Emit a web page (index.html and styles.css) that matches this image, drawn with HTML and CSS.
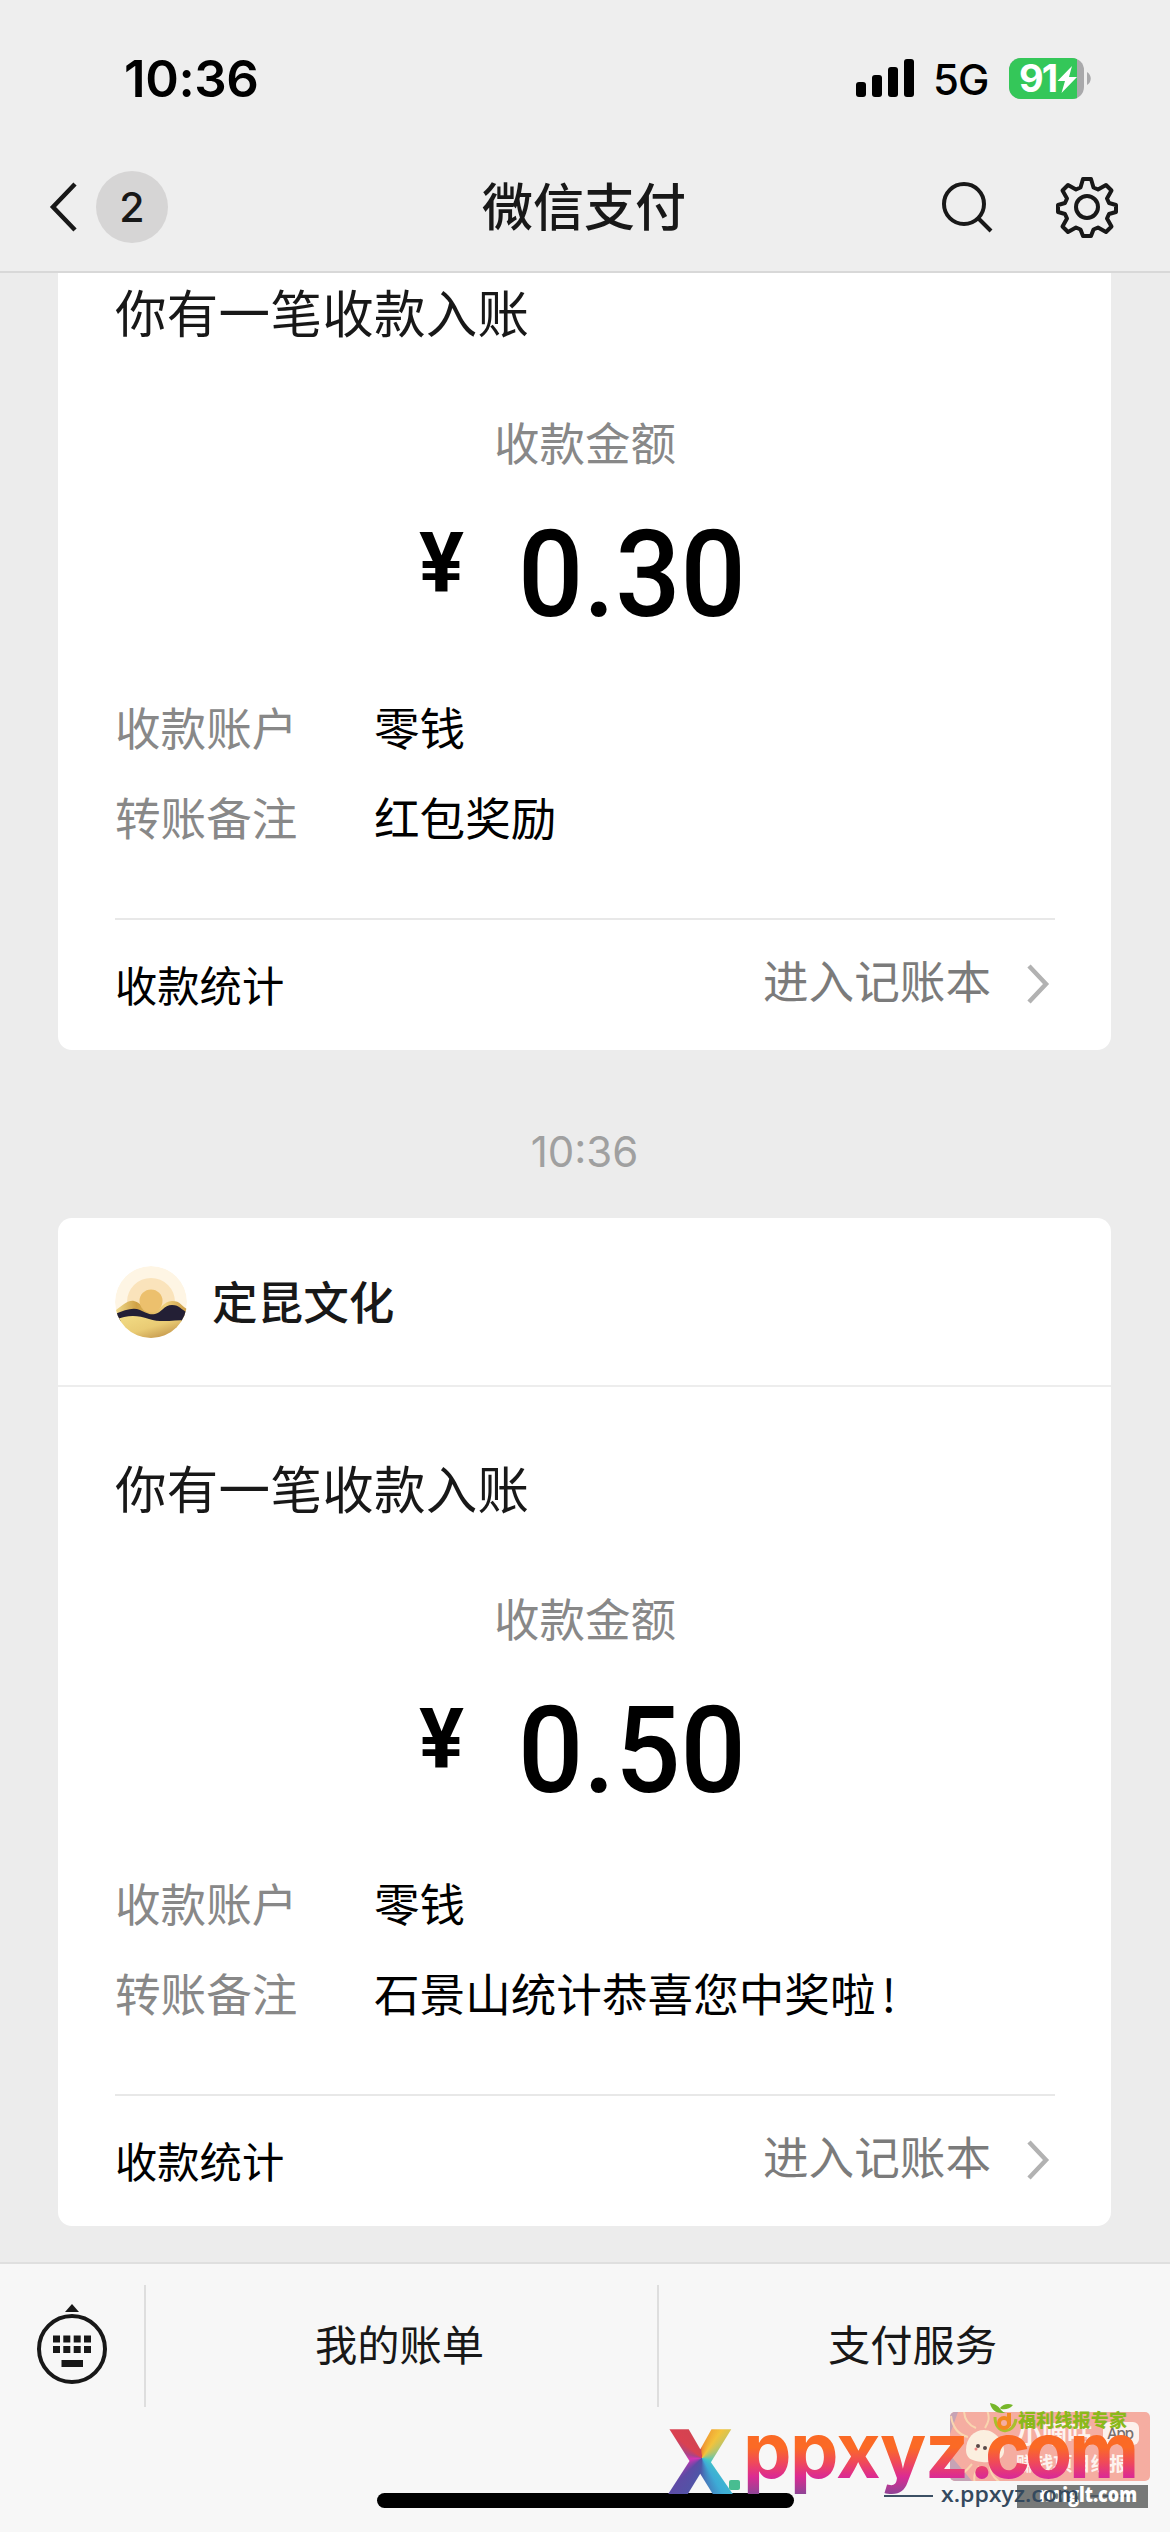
FILE: index.html
```html
<!DOCTYPE html>
<html lang="zh-CN">
<head>
<meta charset="utf-8">
<title>微信支付</title>
<link rel="stylesheet" href="styles.css">
</head>
<body>
<div class="screen">
  <header class="top">
    <div class="status">
      <span class="clock">10:36</span>
      <div class="status-right">
        <svg class="signal" viewBox="0 0 59 38"><rect y="23" width="10" height="15" rx="3"/><rect x="16" y="16" width="10" height="22" rx="3"/><rect x="32" y="8" width="10" height="30" rx="3"/><rect x="48" width="10" height="38" rx="3"/></svg>
        <span class="network">5G</span>
        <svg class="battery" viewBox="0 0 83 41">
          <clipPath id="cell"><rect width="75" height="41" rx="12"/></clipPath>
          <g clip-path="url(#cell)"><rect width="75" height="41" fill="#a9a9ab"/><rect width="68" height="41" fill="#34c759"/></g>
          <path d="M78 14c5 3 5 10 0 13z" fill="#a9a9ab"/>
          <text x="10" y="34" class="level">91</text>
          <path d="M63 8 48.500 23h7.500l-3.500 12L68 19h-8z" fill="#fff"/>
        </svg>
      </div>
    </div>
    <nav class="nav">
      <div class="nav-side">
        <svg class="back" viewBox="0 0 30 52"><path d="M26 3 4 26l22 23"/></svg>
        <span class="badge">2</span>
      </div>
      <h1 class="nav-title">微信支付</h1>
      <div class="nav-side nav-actions">
        <svg class="search" viewBox="0 0 54 54"><circle cx="23" cy="24" r="20"/><path d="M37.500 38.500 50 51"/></svg>
        <svg class="gear" viewBox="-32 -32 64 64"><circle r="11"/><path d="M-4-28h8l2.500 8.500 4.500 2 8-4.500 5.500 5.500-4.500 8 2 4.500 7 2v7l-7 2-2 4.500 4.500 8-5.500 5.500-8-4.500-4.500 2-2.500 6.500h-8l-2.500-6.500-4.500-2-8 4.500-5.500-5.500 4.500-8-2-4.500-7-2v-7l7-2 2-4.500-4.500-8 5.500-5.500 8 4.500 4.500-2z"/></svg>
      </div>
    </nav>
  </header>

  <main class="chat">
    <article class="card card-cut">
      <div class="card-body">
        <h2 class="card-title">你有一笔收款入账</h2>
        <p class="caption">收款金额</p>
        <p class="amount"><span class="yen">¥</span><span class="sum">0.30</span></p>
        <dl class="details">
          <dt>收款账户</dt><dd>零钱</dd>
          <dt>转账备注</dt><dd>红包奖励</dd>
        </dl>
        <div class="card-foot">
          <span>收款统计</span>
          <span class="ledger">进入记账本<svg class="chevron" viewBox="0 0 24 42"><path d="m3 3 17 18L3 39"/></svg></span>
        </div>
      </div>
    </article>

    <time class="stamp">10:36</time>

    <article class="card">
      <div class="merchant">
        <svg class="logo" viewBox="0 0 72 72">
          <defs>
            <linearGradient id="sand" x1="0" y1="0" x2="1" y2="1"><stop offset="0" stop-color="#f3dd86"/><stop offset=".5" stop-color="#e9cb74"/><stop offset="1" stop-color="#b4803a"/></linearGradient>
            <linearGradient id="ridge"><stop offset="0" stop-color="#f0dc90"/><stop offset=".3" stop-color="#d0a145"/><stop offset=".7" stop-color="#efd07c"/><stop offset="1" stop-color="#c99a45"/></linearGradient>
            <clipPath id="disc"><circle cx="36" cy="36" r="36"/></clipPath>
          </defs>
          <g clip-path="url(#disc)">
            <circle cx="36" cy="36" r="36" fill="#fef5e4"/>
            <circle cx="36" cy="36" r="24" fill="#fae3bb"/>
            <path d="M0 45C8 39 13 34 19 35s10 9 18 10 11-10 20-10 9 5 15 8v13H0z" fill="url(#ridge)"/>
            <circle cx="36" cy="35" r="11.500" fill="#ecc06d"/>
            <path d="M0 48c10-4 18-7 25-4s9 5 15 4 9-9 17-9 9 5 15 7v9H0z" fill="#231f35"/>
            <path d="M0 54c12-5 22-5 34-1s24 1 38 1v18H0z" fill="url(#sand)"/>
          </g>
        </svg>
        <span class="merchant-name">定昆文化</span>
      </div>
      <div class="card-body">
        <h2 class="card-title">你有一笔收款入账</h2>
        <p class="caption">收款金额</p>
        <p class="amount"><span class="yen">¥</span><span class="sum">0.50</span></p>
        <dl class="details">
          <dt>收款账户</dt><dd>零钱</dd>
          <dt>转账备注</dt><dd>石景山统计恭喜您中奖啦<span class="bang">!</span></dd>
        </dl>
        <div class="card-foot">
          <span>收款统计</span>
          <span class="ledger">进入记账本<svg class="chevron" viewBox="0 0 24 42"><path d="m3 3 17 18L3 39"/></svg></span>
        </div>
      </div>
    </article>
  </main>

  <footer class="bottom">
    <div class="menu">
      <div class="keys">
        <svg class="keyboard" viewBox="0 0 72 84"><path d="m29 10 7-8 7 8z"/><circle cx="36" cy="47" r="33"/><path d="M17 33.500h7v7h-7zm10.300 0h7v7h-7zm10.400 0h7v7h-7zm10.300 0h7v7h-7zM17 44h7v7h-7zm10.300 0h7v7h-7zm10.400 0h7v7h-7zm10.300 0h7v7h-7zM25.500 58h21.500v7H25.500z"/></svg>
      </div>
      <span class="menu-item">我的账单</span>
      <span class="menu-item">支付服务</span>
    </div>
    <div class="home"></div>
  </footer>

  <svg class="watermark" viewBox="660 2395 510 125">
    <defs>
      <linearGradient id="sunset" gradientUnits="userSpaceOnUse" x1="0" y1="2436" x2="0" y2="2494"><stop offset=".2" stop-color="#fb6a25"/><stop offset=".45" stop-color="#f04a58"/><stop offset=".7" stop-color="#dc2b92"/><stop offset="1" stop-color="#8f4596"/></linearGradient>
      <clipPath id="panel"><rect x="950" y="2412" width="200" height="69" rx="5"/></clipPath>
    </defs>
    <g clip-path="url(#panel)">
      <rect x="950" y="2412" width="200" height="69" fill="#f5ada1"/>
      <path d="M950 2412h8l-8 22zM950 2455l22 26h-22z" fill="#c6a3b5"/>
      <path d="M951 2416c2 14 9 19 17 21M964 2410c0 12 7 16 12 18M986 2408c5 10 2 15-1 20M953 2476c9 0 14-6 19-12M975 2484c-2-8 0-12 4-18M1001 2483c-9-6-11-11-11-20" fill="none" stroke="#f9d6b0" stroke-width="2"/>
      <path d="M966 2450c0-12 8-20 18-20 12 0 21 14 20 22s-11 11-22 10-16-4-16-12z" fill="#fbefdf"/>
      <circle cx="978" cy="2446" r="2" fill="#5a4a48"/><circle cx="985" cy="2448" r="2" fill="#5a4a48"/>
      <circle cx="976" cy="2449" r="1.500" fill="#f08a86"/>
    </g>
    <text x="1017" y="2443" textLength="75" class="wm-cjk" font-size="25">小嘀咕</text>
    <rect x="1103" y="2422" width="36" height="23" rx="6" fill="#fdf1ec"/>
    <text x="1107" y="2439" textLength="27" class="wm-app">App</text>
    <text x="1016" y="2471" textLength="112" class="wm-cjk" font-size="19">赚钱项目线报</text>
    <path d="M1006 2413c-6-1-5-8-16-10 1 6 5 10 12 10zM1000 2408c3-4 8-5 13-3-3 4-8 5-12 4z" fill="#76b72a"/>
    <path d="M995 2417c0 18 19 18 21 2" fill="none" stroke="#a9bf2c" stroke-width="3"/>
    <circle cx="1004" cy="2423" r="5" fill="none" stroke="#f28a20" stroke-width="4"/><path d="M1009 2413v13" stroke="#f28a20" stroke-width="4"/>
    <text x="1018" y="2427" textLength="109" class="wm-green">福利线报专家</text>
    <path d="M884 2496h49" stroke="#3c5064" stroke-width="2"/>
    <rect x="1017" y="2485" width="131" height="23" fill="#777978"/>
    <path d="M1086 2496h50" stroke="#4d5860" stroke-width="2"/>
    <text x="1039" y="2502" textLength="98" lengthAdjust="spacingAndGlyphs" class="wm-small wm-white">noiglt.com</text>
    <text x="941" y="2502" textLength="138" lengthAdjust="spacingAndGlyphs" class="wm-small">x.ppxyz.com</text>
    <text x="743 790 836 880 925 969 985 1025 1069" y="2478" class="wm-large">ppxyz.com</text>
    <foreignObject x="660" y="2414" width="75" height="90"><div class="wm-x">X</div></foreignObject>
    <rect x="729" y="2480" width="11" height="10" rx="2" fill="#48bd91"/>
  </svg>
</div>
</body>
</html>
```
FILE: styles.css
```css
* { box-sizing: border-box; margin: 0; padding: 0; }
body { background: #ececec; font-family: Inter, "Noto Sans CJK SC", sans-serif; color: #000; }
.screen { position: relative; width: 1170px; height: 2532px; overflow: hidden; display: flex; flex-direction: column; }
svg { display: block; flex: none; }
.top { height: 273px; flex: none; background: #eeeeee; border-bottom: 2px solid #d8d8d8; }
.status { height: 141px; padding: 15px 78px 0 124px; display: flex; align-items: center; justify-content: space-between; }
.clock { font-size: 51px; font-weight: 600; letter-spacing: -.4px; }
.status-right { display: flex; align-items: center; }
.signal { width: 59px; height: 38px; margin-right: 18px; }
.network { font-size: 42px; font-weight: 500; width: 57px; margin-right: 19px; letter-spacing: -1px; padding-top: 2px; }
.battery { width: 83px; height: 41px; }
.level { font: 700 38px Inter, sans-serif; fill: #fff; letter-spacing: -2px; }
.nav { height: 132px; display: flex; align-items: center; justify-content: space-between; padding: 0 51px 0 49px; }
.nav-side { width: 210px; display: flex; align-items: center; }
.nav-actions { justify-content: flex-end; }
.back { width: 30px; height: 52px; margin-right: 17px; fill: none; stroke: #181818; stroke-width: 4.500px; }
.badge { width: 72px; height: 72px; border-radius: 50%; background: #d6d5d5; color: #181818; font-size: 41px; font-weight: 500; line-height: 72px; text-align: center; }
.nav-title { font-size: 51px; font-weight: 500; color: #181818; line-height: 74px; padding-top: 2px; }
.search { width: 54px; height: 54px; margin-right: 60px; fill: none; stroke: #181818; stroke-width: 4px; }
.gear { width: 64px; height: 64px; fill: none; stroke: #181818; stroke-width: 4px; stroke-linejoin: round; }
.chat { height: 1989px; flex: none; padding: 0 59px 0 58px; overflow: hidden; }
.card { background: #fff; border-radius: 14px; }
.card-cut { border-radius: 0 0 14px 14px; height: 777px; }
.card-cut .card-body { padding-top: 3px; }
.card-body { padding: 65px 56px 0 57px; }
.card-title { font-size: 51.500px; letter-spacing: .3px; line-height: 76px; font-weight: 400; color: #181818; }
.caption { font-size: 45.500px; line-height: 66px; color: #888; text-align: center; margin-top: 60px; }
.amount { display: flex; justify-content: center; align-items: flex-start; height: 142px; margin-top: 26px; padding-right: 4px; font-family: Roboto, sans-serif; font-weight: 500; }
.yen { font-size: 84px; line-height: 98px; margin: 11px 48px 0 5px; font-weight: 700; }
.sum { font-size: 121px; line-height: 142px; transform: scaleX(.95); }
.details { display: grid; grid-template-columns: 259px 1fr; row-gap: 24px; font-size: 45.600px; line-height: 66px; margin-top: 51px; }
.details dt { color: #888; }
.bang { font-family: "Noto Sans CJK SC", sans-serif; padding-left: 6px; line-height: 1px; }
.card-foot { display: flex; align-items: center; justify-content: space-between; border-top: 2px solid #e8e8e8; margin-top: 65px; height: 130px; font-size: 42.300px; padding-bottom: 2px; }
.ledger { display: flex; align-items: center; font-size: 45.600px; color: #7b7b7b; line-height: 62px; }
.chevron { width: 24px; height: 42px; margin: 2px 5px 0 35px; fill: none; stroke: #b2b2b2; stroke-width: 4.500px; }
.stamp { display: block; height: 168px; padding-top: 76px; line-height: 51px; text-align: center; font-size: 42px; color: #a0a0a0; }
.card:last-child { height: 1008px; }
.merchant { display: flex; align-items: center; height: 169px; padding-left: 57px; border-bottom: 2px solid #ededed; font-size: 45.600px; font-weight: 500; color: #181818; }
.merchant-name { padding-bottom: 4px; }
.logo { width: 72px; height: 72px; margin-right: 25px; }
.bottom { flex: 1; background: #f7f7f7; border-top: 2px solid #dfdfdf; display: flex; flex-direction: column; }
.menu { display: flex; padding-top: 21px; }
.keys { width: 144px; height: 122px; display: flex; justify-content: center; align-items: flex-start; padding-top: 17px; }
.keyboard { width: 72px; height: 84px; fill: #181818; }
.keyboard circle { fill: none; stroke: #181818; stroke-width: 4px; }
.menu-item { flex: 1; height: 122px; line-height: 122px; border-left: 2px solid #dedede; padding-right: 4px; text-align: center; color: #181818; font-size: 42.300px; }
.home { width: 417px; height: 15px; border-radius: 8px; background: #000; margin: 86px 0 0 377px; }
.watermark { position: absolute; left: 660px; top: 2395px; width: 510px; height: 125px; }
.wm-cjk { font-family: "Noto Sans CJK SC", sans-serif; font-weight: 700; fill: #fdf3ef; }
.wm-app { font: 500 15px Inter, sans-serif; fill: #77706f; }
.wm-green { font: 900 18px "Noto Sans CJK SC", sans-serif; fill: #8ab91b; }
.wm-small { font: 600 21px "Open Sans", sans-serif; fill: #34495e; }
.wm-white { fill: #fff; font-weight: 800; }
.wm-large { font: 700 77px Inter, sans-serif; fill: url(#sunset); }
.wm-x { width: 75px; height: 90px; font: 800 90px/90px "Open Sans", sans-serif; padding-left: 8px; color: transparent; background: conic-gradient(from 0deg at 42px 44px, #ee8d2f, #f3c33b 35deg, #43c7c8 110deg, #3dabd6 150deg, #4c58a8 185deg, #5d4ba5 225deg, #d633b5 265deg, #a94488 285deg, #da4150 310deg, #cf4450 350deg, #ee8d2f); background-clip: text; -webkit-background-clip: text; }
```
